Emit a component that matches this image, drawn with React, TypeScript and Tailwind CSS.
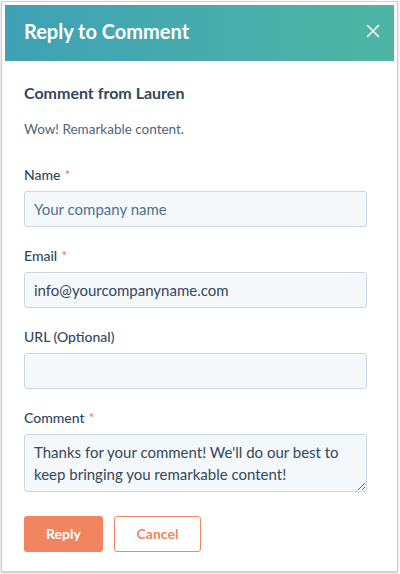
import { X } from 'lucide-react';

const labelClass = 'text-[14px] font-medium text-[#33475b] leading-none';
const inputClass =
  'w-full h-[36px] rounded-[3px] border border-[#cbd6e2] bg-[#f5f8fa] px-[9px] text-[15px] text-[#33475b] placeholder:text-[#516f90] outline-none';

function Field({
  label,
  required,
  children,
}: {
  label: string;
  required?: boolean;
  children: React.ReactNode;
}) {
  return (
    <div className="flex flex-col gap-[9px]">
      <label className={labelClass}>
        {label}
        {required && <span className="ml-[4px] text-[#f2835f]">*</span>}
      </label>
      {children}
    </div>
  );
}

export default function App() {
  return (
    <div className="w-[400px] h-[574px] bg-white font-['Lato',sans-serif]">
      <div className="ml-[1px] mt-[1px] w-[397px] h-[571px] border border-[#cfcfcf] bg-white p-[3px] shadow-[0_1px_2px_rgba(0,0,0,0.25)] flex flex-col">
        <div className="h-[56px] shrink-0 flex items-center justify-between pl-[19px] pr-[10px] pb-[4px] bg-gradient-to-r from-[#3fa1b5] to-[#4fb5a3]">
          <h1 className="text-[20px] font-bold text-white">Reply to Comment</h1>
          <X className="w-[22px] h-[22px] text-white" strokeWidth={1.6} />
        </div>
        <div className="flex flex-col pl-[19px] pr-[27px] pt-[24px]">
          <h2 className="text-[16px] font-bold text-[#33475b] leading-none">
            Comment from Lauren
          </h2>
          <p className="mt-[22px] text-[13.5px] text-[#51637a] leading-none">
            Wow! Remarkable content.
          </p>
          <div className="mt-[31px] flex flex-col gap-[22px]">
            <Field label="Name" required>
              <input className={inputClass} placeholder="Your company name" />
            </Field>
            <Field label="Email" required>
              <input
                className={inputClass}
                defaultValue="info@yourcompanyname.com"
              />
            </Field>
            <Field label="URL (Optional)">
              <input className={inputClass} />
            </Field>
            <Field label="Comment" required>
              <textarea
                className="w-full h-[58px] rounded-[3px] border border-[#cbd6e2] bg-[#f5f8fa] px-[9px] pt-[6px] text-[15px] leading-[22px] text-[#33475b] outline-none resize-y"
                defaultValue="Thanks for your comment! We'll do our best to keep bringing you remarkable content!"
              />
            </Field>
          </div>
          <div className="mt-[24px] flex gap-[11px]">
            <button className="h-[36px] w-[79px] rounded-[3px] bg-[#f2845f] text-[14px] font-bold text-white">
              Reply
            </button>
            <button className="h-[36px] w-[87px] rounded-[3px] border border-[#f2845f] bg-white text-[14px] font-bold text-[#f2845f]">
              Cancel
            </button>
          </div>
        </div>
      </div>
    </div>
  );
}
